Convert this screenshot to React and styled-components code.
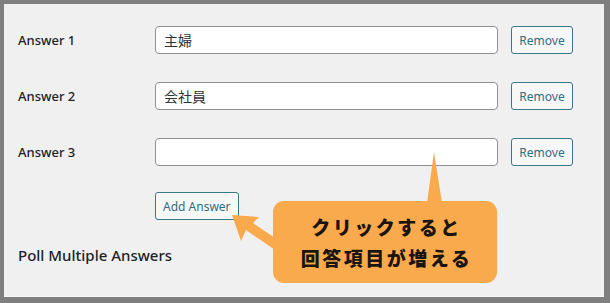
import styled, { createGlobalStyle } from "styled-components";

const GlobalStyle = createGlobalStyle`
  html, body {
    margin: 0;
    padding: 0;
    background: #7f7f7f;
  }
  body {
    font-family: "Noto Sans", "Noto Sans CJK JP", sans-serif;
  }
`;

const Frame = styled.div`
  position: relative;
  width: 610px;
  height: 303px;
  box-sizing: border-box;
  padding: 4px 6px 6px 4px;
  background: #7f7f7f;
`;

const Panel = styled.div`
  height: 100%;
  box-sizing: border-box;
  background: #f0f0f1;
  border-bottom: 1px solid #fafafa;
  padding: 22px 0 0 14px;
`;

const Rows = styled.div`
  display: flex;
  flex-direction: column;
  gap: 28px;
`;

const Row = styled.div`
  display: grid;
  grid-template-columns: 124px 343px 62px;
  column-gap: 13px;
  align-items: center;
  height: 28px;
`;

const Label = styled.div`
  font-size: 13px;
  font-weight: 500;
  color: #1d2327;
`;

const TextInput = styled.input`
  box-sizing: border-box;
  width: 100%;
  height: 28px;
  border: 1px solid #8c8f94;
  border-radius: 4px;
  background: #fff;
  padding: 0 8px;
  font-family: "Noto Sans CJK JP", sans-serif;
  font-size: 14px;
  color: #2c3338;
  outline: none;
`;

const Button = styled.button`
  box-sizing: border-box;
  height: 28px;
  padding: 0 7px;
  border: 1px solid #3a7886;
  border-radius: 3px;
  background: #f6f7f7;
  color: #2f6f82;
  font-family: "Noto Sans", sans-serif;
  font-size: 12px;
  cursor: pointer;
`;

const AddRow = styled.div`
  margin: 26px 0 0 137px;
`;

const Heading = styled.h2`
  margin: 25px 0 0 0;
  font-size: 15px;
  font-weight: 500;
  color: #1d2327;
`;

const Callout = styled.div`
  position: absolute;
  left: 273px;
  top: 201px;
  width: 224px;
  height: 82px;
  box-sizing: border-box;
  padding-left: 3px;
  border-radius: 11px;
  background: #f9aa4c;
  display: flex;
  flex-direction: column;
  justify-content: center;
  align-items: center;
  gap: 5px;
  font-family: "Noto Sans CJK JP", sans-serif;
  font-weight: 900;
  font-size: 19px;
  letter-spacing: 2.5px;
  color: #1a1510;
  line-height: 1.35;
`;

const Pointers = styled.svg`
  position: absolute;
  left: 0;
  top: 0;
  pointer-events: none;
`;

const answers = ["主婦", "会社員", ""];

export default function App() {
  return (
    <>
      <GlobalStyle />
      <Frame>
        <Panel>
          <Rows>
            {answers.map((value, i) => (
              <Row key={i}>
                <Label>Answer {i + 1}</Label>
                <TextInput defaultValue={value} />
                <Button>Remove</Button>
              </Row>
            ))}
          </Rows>
          <AddRow>
            <Button>Add Answer</Button>
          </AddRow>
          <Heading>Poll Multiple Answers</Heading>
        </Panel>
        <Pointers width="610" height="303" viewBox="0 0 610 303">
          <polygon points="427,203 442,203 434,152" fill="#f9aa4c" />
          <polygon
            points="232,215 259,217 253,223 278,240 278,252 246,230 241,241"
            fill="#f9aa4c"
          />
        </Pointers>
        <Callout>
          <div>クリックすると</div>
          <div>回答項目が増える</div>
        </Callout>
      </Frame>
    </>
  );
}
